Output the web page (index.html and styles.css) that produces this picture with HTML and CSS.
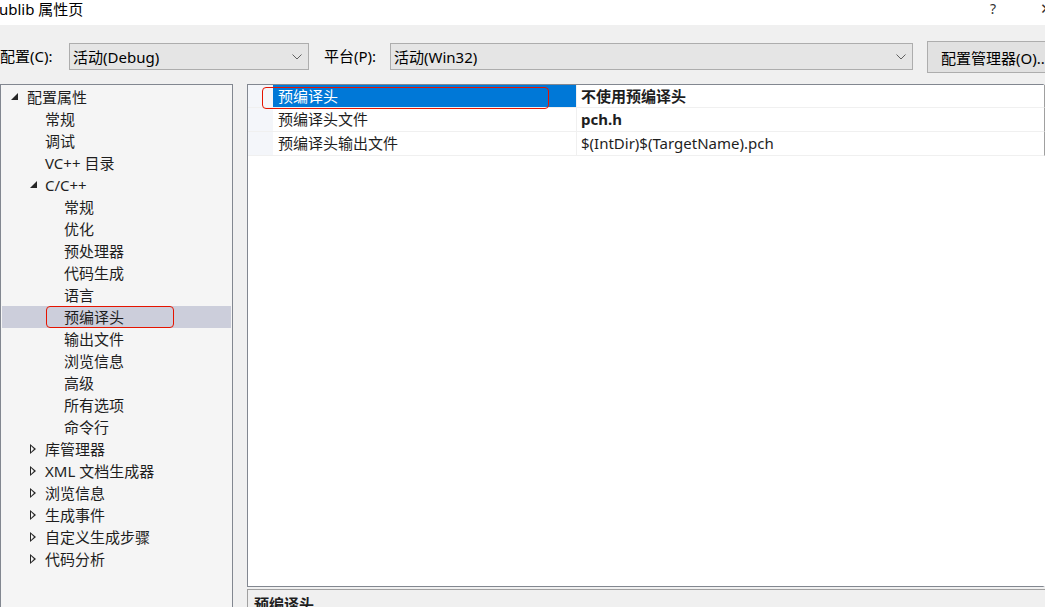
FILE: index.html
```html
<!DOCTYPE html>
<html lang="zh-CN">
<head>
  <meta charset="UTF-8">
  <title>ublib 属性页</title>
  <link rel="stylesheet" href="styles.css">
</head>
<body>
  <div class="dialog">
    <div class="titlebar">
      <span class="title">ublib 属性页</span>
      <div class="title-buttons">
        <span class="help">?</span>
        <span class="close">✕</span>
      </div>
    </div>

    <div class="toolbar">
      <label class="field-label">配置(C):</label>
      <div class="combo combo-config">
        <span>活动(Debug)</span>
        <svg class="chevron" viewBox="0 0 10 6"><path d="M0.5 0.5 L5 5 L9.5 0.5" fill="none" stroke="#606060" stroke-width="1"/></svg>
      </div>
      <label class="field-label platform-label">平台(P):</label>
      <div class="combo combo-platform">
        <span>活动(Win32)</span>
        <svg class="chevron" viewBox="0 0 10 6"><path d="M0.5 0.5 L5 5 L9.5 0.5" fill="none" stroke="#606060" stroke-width="1"/></svg>
      </div>
      <button class="btn">配置管理器(O)...</button>
    </div>

    <div class="main">
      <!-- left tree -->
      <div class="tree">
        <div class="node lvl0"><span class="arrow open"></span>配置属性</div>
        <div class="node lvl1">常规</div>
        <div class="node lvl1">调试</div>
        <div class="node lvl1">VC++ 目录</div>
        <div class="node lvl1"><span class="arrow open"></span>C/C++</div>
        <div class="node lvl2">常规</div>
        <div class="node lvl2">优化</div>
        <div class="node lvl2">预处理器</div>
        <div class="node lvl2">代码生成</div>
        <div class="node lvl2">语言</div>
        <div class="node lvl2 selected"><span class="mark"></span>预编译头</div>
        <div class="node lvl2">输出文件</div>
        <div class="node lvl2">浏览信息</div>
        <div class="node lvl2">高级</div>
        <div class="node lvl2">所有选项</div>
        <div class="node lvl2">命令行</div>
        <div class="node lvl1"><span class="arrow closed"></span>库管理器</div>
        <div class="node lvl1"><span class="arrow closed"></span>XML 文档生成器</div>
        <div class="node lvl1"><span class="arrow closed"></span>浏览信息</div>
        <div class="node lvl1"><span class="arrow closed"></span>生成事件</div>
        <div class="node lvl1"><span class="arrow closed"></span>自定义生成步骤</div>
        <div class="node lvl1"><span class="arrow closed"></span>代码分析</div>
      </div>

      <!-- right side -->
      <div class="right">
        <div class="grid">
          <div class="row">
            <div class="gutter"></div>
            <div class="name active"><span class="mark"></span>预编译头</div>
            <div class="value bold">不使用预编译头</div>
          </div>
          <div class="row">
            <div class="gutter"></div>
            <div class="name">预编译头文件</div>
            <div class="value bold">pch.h</div>
          </div>
          <div class="row">
            <div class="gutter"></div>
            <div class="name">预编译头输出文件</div>
            <div class="value">$(IntDir)$(TargetName).pch</div>
          </div>
        </div>
        <div class="desc">
          <div class="desc-title">预编译头</div>
        </div>
      </div>
    </div>
  </div>
</body>
</html>
```

FILE: styles.css
```css
:root {
  --dialog-bg: #f0f0f0;
  --border: #a0a0a0;
  --control-bg: #e1e1e1;
  --control-border: #adadad;
  --select-blue: #0078d7;
  --tree-select: #cccedb;
  --text: #1e1e1e;
  --mark: #e51400;
}

html, body {
  margin: 0;
  padding: 0;
}

body {
  width: 1045px;
  height: 607px;
  overflow: hidden;
  font-family: "Noto Sans", "Noto Sans CJK SC", sans-serif;
  font-size: 15px;
  color: var(--text);
  background-color: var(--dialog-bg);
}

.dialog {
  display: flex;
  flex-direction: column;
  height: 607px;
}

/* title bar */
.titlebar {
  height: 25px;
  flex: none;
  background-color: white;
  display: flex;
  align-items: center;
  justify-content: space-between;
  overflow: hidden;
}

.title {
  font-size: 15px;
  margin-left: -1px;
  margin-top: -9px;
  color: #000;
}

.title-buttons {
  display: flex;
  align-items: center;
  gap: 44px;
  margin-right: -8px;
  margin-top: -9px;
  font-size: 14px;
}

.help {
  color: #333;
}

.close {
  color: #333;
  font-size: 15px;
}

/* toolbar */
.toolbar {
  height: 59px;
  flex: none;
  display: flex;
  align-items: flex-start;
  padding-top: 18px;
  box-sizing: border-box;
  overflow: hidden;
}

.field-label {
  flex: none;
  line-height: 27px;
  width: 69px;
  color: #000;
}

.platform-label {
  margin-left: 15px;
  width: 66px;
}

.combo {
  flex: none;
  height: 27px;
  box-sizing: border-box;
  border: 1px solid var(--control-border);
  background-color: #e5e5e5;
  display: flex;
  align-items: center;
  justify-content: space-between;
  padding: 0 6px 0 3px;
  color: #000;
}

.combo-config {
  width: 240px;
}

.combo-platform {
  width: 523px;
}

.chevron {
  width: 10px;
  height: 6px;
}

.btn {
  margin-left: 14px;
  margin-top: -2px;
  height: 32px;
  width: 130px;
  flex: none;
  border: 1px solid var(--control-border);
  background-color: var(--control-bg);
  font-family: inherit;
  font-size: 15px;
  color: #000;
  text-align: left;
  padding: 0 0 0 13px;
  white-space: nowrap;
}

/* main area */
.main {
  flex: 1;
  display: flex;
  gap: 14px;
  min-height: 0;
}

.tree {
  width: 233px;
  flex: none;
  box-sizing: border-box;
  border: 1px solid #828790;
  border-bottom: none;
  background-color: #f5f5f5;
  padding-top: 1px;
}

.node {
  position: relative;
  height: 22px;
  line-height: 22px;
  white-space: nowrap;
  display: flex;
  align-items: center;
}

.lvl0 { padding-left: 26px; }
.lvl1 { padding-left: 44px; }
.lvl2 { padding-left: 63px; }

.node.selected {
  background-color: var(--tree-select);
  margin: 0 1px;
  padding-left: 62px;
}

.arrow {
  position: absolute;
  width: 0;
  height: 0;
}

.lvl0 .arrow { left: 10px; }
.lvl1 .arrow { left: 29px; }

.arrow.open {
  top: 7px;
  border-left: 7px solid transparent;
  border-bottom: 7px solid #262626;
}

.arrow.closed {
  top: 6px;
  width: 5px;
  height: 8px;
  border: none;
}

.arrow.closed::before {
  content: "";
  position: absolute;
  left: 0;
  top: 0;
  border-top: 5px solid transparent;
  border-bottom: 5px solid transparent;
  border-left: 6px solid #262626;
}

.arrow.closed::after {
  content: "";
  position: absolute;
  left: 1px;
  top: 2px;
  border-top: 3px solid transparent;
  border-bottom: 3px solid transparent;
  border-left: 3.5px solid #f5f5f5;
}

.mark {
  position: absolute;
  border: 1px solid var(--mark);
  border-radius: 4px;
}

.node .mark {
  left: 44px;
  top: 0;
  width: 126px;
  height: 20px;
}

/* right side: property grid + description */
.right {
  flex: 1;
  display: flex;
  flex-direction: column;
  gap: 2px;
  min-width: 0;
}

.grid {
  flex: 1;
  box-sizing: border-box;
  border: 1px solid #828790;
  background-color: white;
  border-right: 2px solid transparent;
}

.row {
  display: flex;
  height: 23px;
  line-height: 23px;
  border-bottom: 1px solid #f0f0f0;
  margin-right: -2px;
  border-right: 1px solid #a0a0a0;
}

.row:first-child {
  height: 22px;
}

.gutter {
  width: 25px;
  flex: none;
  background-color: #f4f6fa;
}

.name {
  position: relative;
  width: 304px;
  flex: none;
  padding-left: 5px;
  box-sizing: border-box;
  border-right: 1px solid #f0f0f0;
}

.name.active {
  background-color: var(--select-blue);
  color: white;
}

.name .mark {
  left: -11px;
  top: 2px;
  width: 285px;
  height: 20px;
}

.value {
  flex: 1;
  padding-left: 4px;
  white-space: nowrap;
}

.bold {
  font-weight: bold;
}

.desc {
  height: 17px;
  flex: none;
  border: 1px solid #a0a0a0;
  border-bottom: none;
  border-right: none;
  background-color: var(--dialog-bg);
  padding-left: 6px;
  overflow: hidden;
}

.desc-title {
  font-weight: bold;
  line-height: 28px;
}
```
